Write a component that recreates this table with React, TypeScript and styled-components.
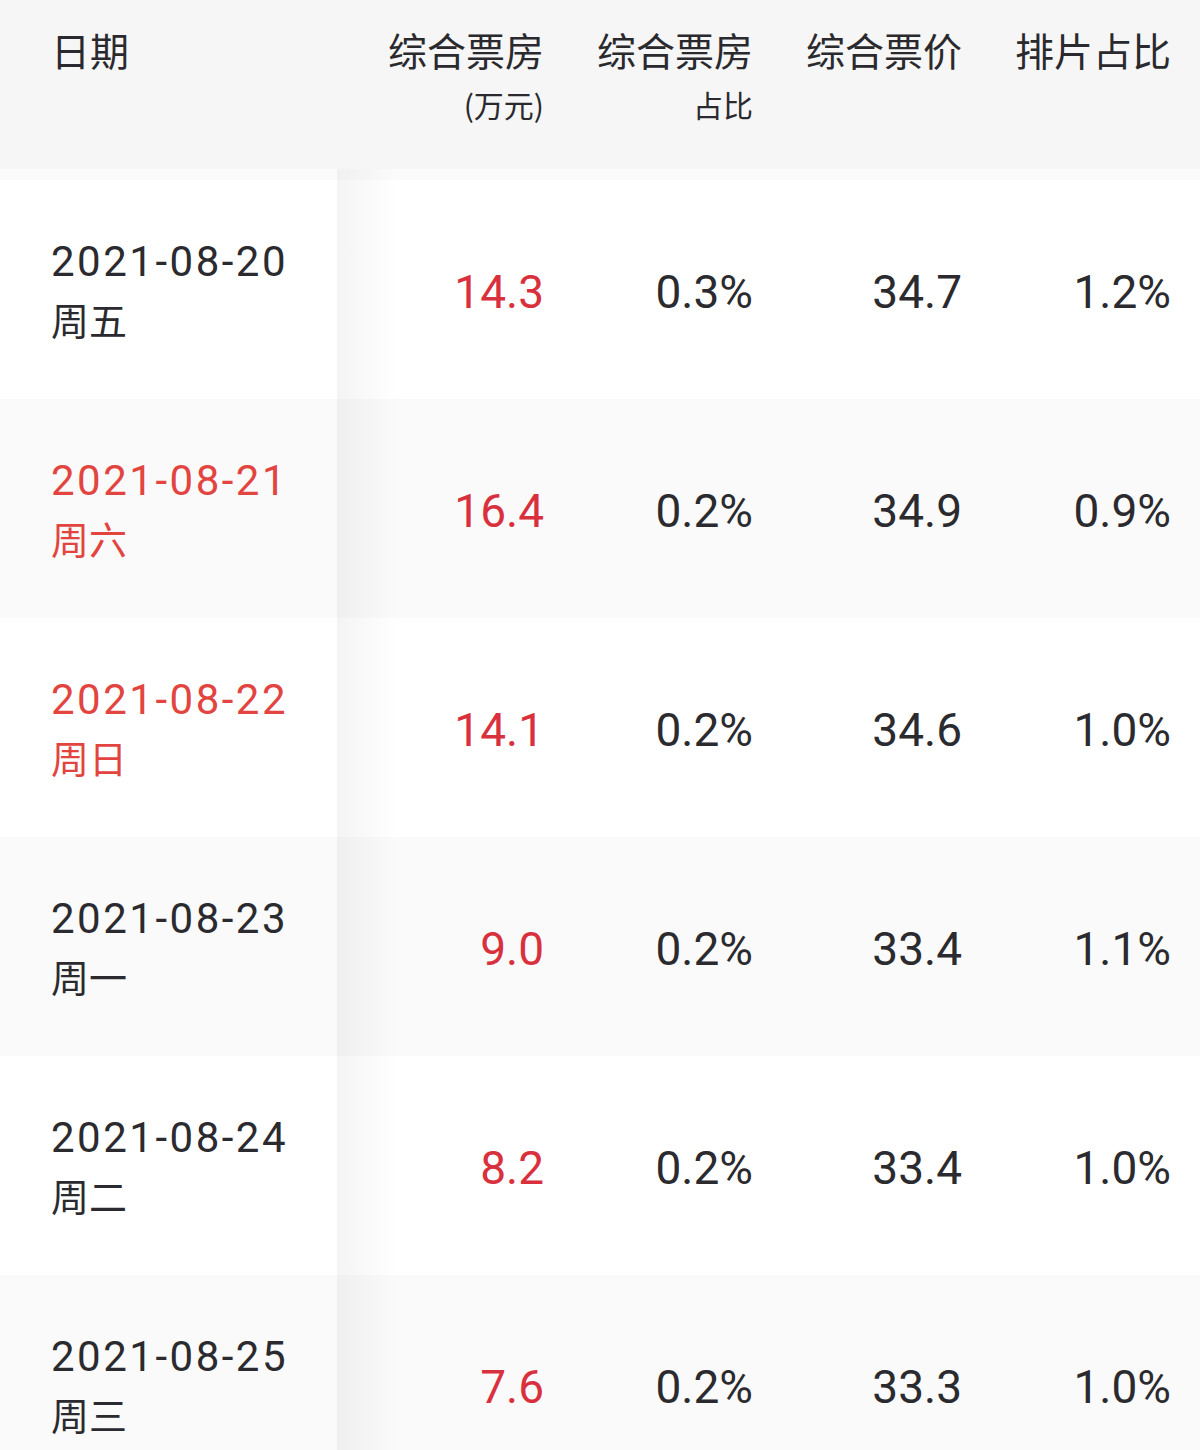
import React from 'react'
import styled, { createGlobalStyle } from 'styled-components'

const GlobalStyle = createGlobalStyle`
  html, body {
    margin: 0;
    padding: 0;
    background: #ffffff;
  }
  body {
    font-family: Roboto, "Noto Sans CJK SC", sans-serif;
    color: #2b2b2f;
  }
`

type Row = {
  date: string
  week: string
  weekend?: boolean
  box: string
  share: string
  price: string
  seat: string
}

const rows: Row[] = [
  { date: '2021-08-20', week: '周五', box: '14.3', share: '0.3%', price: '34.7', seat: '1.2%' },
  { date: '2021-08-21', week: '周六', weekend: true, box: '16.4', share: '0.2%', price: '34.9', seat: '0.9%' },
  { date: '2021-08-22', week: '周日', weekend: true, box: '14.1', share: '0.2%', price: '34.6', seat: '1.0%' },
  { date: '2021-08-23', week: '周一', box: '9.0', share: '0.2%', price: '33.4', seat: '1.1%' },
  { date: '2021-08-24', week: '周二', box: '8.2', share: '0.2%', price: '33.4', seat: '1.0%' },
  { date: '2021-08-25', week: '周三', box: '7.6', share: '0.2%', price: '33.3', seat: '1.0%' },
]

const columns = [
  { title: '综合票房', sub: '(万元)' },
  { title: '综合票房', sub: '占比' },
  { title: '综合票价' },
  { title: '排片占比' },
]

function App() {
  return (
    <>
      <GlobalStyle />
      <Table>
        <HeaderRow>
          <HeadCell first>
            <HeadTitle>日期</HeadTitle>
          </HeadCell>
          {columns.map((c, i) => (
            <HeadCell key={i}>
              <HeadTitle>{c.title}</HeadTitle>
              {c.sub && <HeadSub>{c.sub}</HeadSub>}
            </HeadCell>
          ))}
        </HeaderRow>
        <Spacer>
          <DateCell />
        </Spacer>
        {rows.map((r, i) => (
          <BodyRow key={r.date} striped={i % 2 === 1}>
            <DateCell>
              <DateText red={r.weekend}>{r.date}</DateText>
              <WeekText red={r.weekend}>{r.week}</WeekText>
            </DateCell>
            <NumCell red>{r.box}</NumCell>
            <NumCell>{r.share}</NumCell>
            <NumCell>{r.price}</NumCell>
            <NumCell>{r.seat}</NumCell>
          </BodyRow>
        ))}
      </Table>
    </>
  )
}

export default App

const grid = '337px 209px 209px 209px 209px 1fr'

const Table = styled.div`
  width: 1200px;
  height: 1450px;
  overflow: hidden;
  background: #ffffff;
`

const HeaderRow = styled.div`
  display: grid;
  grid-template-columns: ${grid};
  height: 169px;
  background: #f6f6f6;
`

const HeadCell = styled.div<{ first?: boolean }>`
  display: flex;
  flex-direction: column;
  align-items: ${(p) => (p.first ? 'flex-start' : 'flex-end')};
  padding: 22px ${(p) => (p.first ? '0' : '2px')} 0 ${(p) => (p.first ? '51px' : '0')};
  font-family: "Noto Sans CJK SC", sans-serif;
  color: #2a2a2e;
`

const HeadTitle = styled.div`
  font-size: 39px;
  line-height: 54px;
  white-space: nowrap;
`

const HeadSub = styled.div`
  font-size: 30px;
  line-height: 56px;
  white-space: nowrap;
`

const Spacer = styled.div`
  display: grid;
  grid-template-columns: ${grid};
  height: 11px;
  background: #fbfbfb;
`

const BodyRow = styled.div<{ striped?: boolean }>`
  display: grid;
  grid-template-columns: ${grid};
  height: 219px;
  align-items: center;
  background: ${(p) => (p.striped ? '#fafafa' : '#ffffff')};
`

const DateCell = styled.div`
  position: relative;
  align-self: stretch;
  display: flex;
  flex-direction: column;
  justify-content: center;
  padding-left: 51px;

  &::after {
    content: '';
    position: absolute;
    top: 0;
    bottom: 0;
    left: 100%;
    width: 60px;
    background: linear-gradient(to right, rgba(0, 0, 0, 0.045), rgba(0, 0, 0, 0));
    pointer-events: none;
  }
`

const DateText = styled.div<{ red?: boolean }>`
  font-family: Roboto, sans-serif;
  font-size: 42px;
  letter-spacing: 2.5px;
  line-height: 57px;
  color: ${(p) => (p.red ? '#e2453f' : '#2b2b2f')};
`

const WeekText = styled.div<{ red?: boolean }>`
  font-family: "Noto Sans CJK SC", sans-serif;
  font-size: 38px;
  line-height: 57px;
  color: ${(p) => (p.red ? '#e2453f' : '#2b2b2f')};
`

const NumCell = styled.div<{ red?: boolean }>`
  text-align: right;
  padding-right: 2px;
  padding-top: 4px;
  font-family: Roboto, sans-serif;
  font-size: 46px;
  color: ${(p) => (p.red ? '#d9303e' : '#2b2b2f')};
`
